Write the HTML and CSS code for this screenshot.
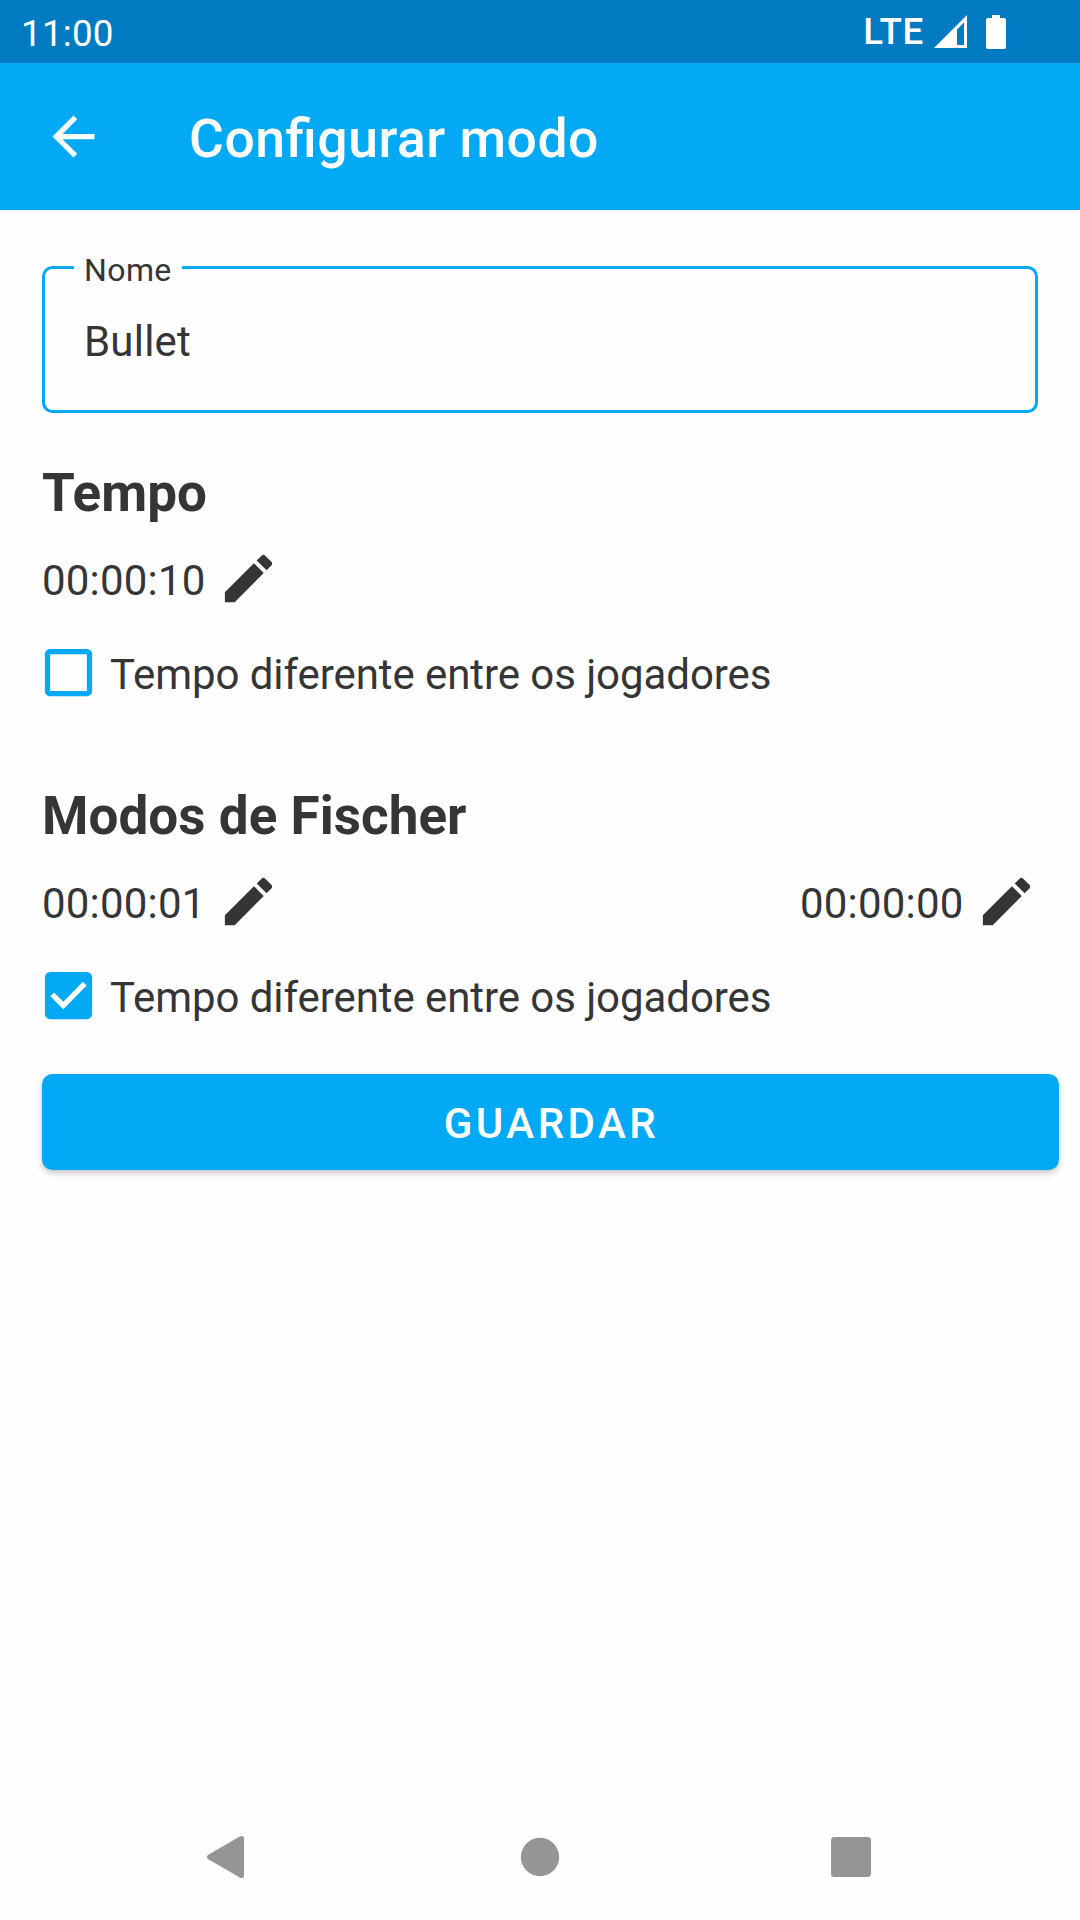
FILE: index.html
```html
<!DOCTYPE html>
<html lang="pt">
<head>
  <meta charset="UTF-8"/>
  <meta name="viewport" content="width=device-width, initial-scale=1.0"/>
  <title>Configurar modo</title>
  <link rel="stylesheet" href="styles.css">
</head>
<body>
  <div class="status-bar">
    <span class="clock">11:00</span>
    <span class="network">LTE</span>
    <svg class="signal" viewBox="0 0 33 33"><path fill-rule="evenodd" d="M33 0V33H0ZM30 7.5L23 14.5V30H30Z"/></svg>
    <svg class="battery" viewBox="0 0 20 34"><path d="M6 0h8v3h4.200a1.800 1.800 0 0 1 1.800 1.800v27.400a1.800 1.800 0 0 1-1.800 1.800H1.800a1.800 1.800 0 0 1-1.800-1.800V4.800A1.800 1.800 0 0 1 1.800 3H6z"/></svg>
  </div>
  <header class="app-bar">
    <svg class="icon" viewBox="0 0 24 24"><path d="M20 11H7.830l5.590-5.590L12 4l-8 8 8 8 1.410-1.410L7.830 13H20v-2z"/></svg>
    <h1>Configurar modo</h1>
  </header>
  <main>
    <div class="field">
      <label for="nome">Nome</label>
      <input type="text" id="nome" value="Bullet" autocomplete="off" spellcheck="false"/>
    </div>

    <section>
      <h2>Tempo</h2>
      <div class="times">
        <div class="time">
          <span>00:00:10</span>
          <svg class="icon" viewBox="0 0 24 24"><path d="M3 17.250V21h3.750L17.810 9.940l-3.750-3.750L3 17.250zM20.710 7.040c.390-.390.390-1.020 0-1.410l-2.340-2.340c-.390-.390-1.020-.390-1.410 0l-1.830 1.830 3.750 3.750 1.830-1.830z"/></svg>
        </div>
      </div>
      <div class="check">
        <svg class="icon" viewBox="0 0 24 24"><path d="M19 5v14H5V5h14m0-2H5c-1.100 0-2 .9-2 2v14c0 1.100.9 2 2 2h14c1.100 0 2-.9 2-2V5c0-1.100-.9-2-2-2z"/></svg>
        <span>Tempo diferente entre os jogadores</span>
      </div>
    </section>

    <section>
      <h2>Modos de Fischer</h2>
      <div class="times">
        <div class="time">
          <span>00:00:01</span>
          <svg class="icon" viewBox="0 0 24 24"><path d="M3 17.250V21h3.750L17.810 9.940l-3.750-3.750L3 17.250zM20.710 7.040c.390-.390.390-1.020 0-1.410l-2.340-2.340c-.390-.390-1.020-.390-1.410 0l-1.830 1.830 3.750 3.750 1.830-1.830z"/></svg>
        </div>
        <div class="time">
          <span>00:00:00</span>
          <svg class="icon" viewBox="0 0 24 24"><path d="M3 17.250V21h3.750L17.810 9.940l-3.750-3.750L3 17.250zM20.710 7.040c.390-.390.390-1.020 0-1.410l-2.340-2.340c-.390-.390-1.020-.390-1.410 0l-1.830 1.830 3.750 3.750 1.830-1.830z"/></svg>
        </div>
      </div>
      <div class="check">
        <svg class="icon" viewBox="0 0 24 24"><rect x="3" y="3" width="18" height="18" rx="2"/><path class="tick" d="M5.800 11.600L10 15.800 18.200 7.500"/></svg>
        <span>Tempo diferente entre os jogadores</span>
      </div>
    </section>

    <button type="button" class="save-btn">GUARDAR</button>
  </main>
  <nav class="nav-bar">
    <svg viewBox="0 0 44 44"><path d="M34.500 3.500V40.500L2.500 22Z" stroke-width="5" stroke-linejoin="round"/></svg>
    <svg viewBox="0 0 44 44"><circle cx="22" cy="22" r="19.200"/></svg>
    <svg viewBox="0 0 44 44"><rect x="2" y="2" width="40" height="40" rx="3.500"/></svg>
  </nav>
</body>
</html>
```
FILE: styles.css
```css
* { box-sizing:border-box; }
body {
  margin:0;
  min-height:100vh;
  display:flex;
  flex-direction:column;
  background:#fefefe;
  color:#353535;
  font-family:Roboto,sans-serif;
  font-size:42px;
}
svg { display:block; flex:none; }
.icon { width:63px; height:63px; fill:currentColor; }
.status-bar {
  height:63px;
  background:#007ac1;
  color:#fff;
  fill:#fff;
  display:flex;
  align-items:center;
  padding:0 74px 0 21px;
  font-size:36.75px;
}
.clock { padding-top:4px; margin-right:auto; letter-spacing:0.25px; }
.network { margin-right:10px; font-weight:500; letter-spacing:0.7px; }
.signal { width:33px; height:33px; margin-right:19px; }
.battery { width:20px; height:34px; }
.app-bar {
  height:147px;
  background:#03a9f4;
  color:#fff;
  display:flex;
  align-items:center;
  gap:84px;
  padding:0 42px;
}
h1 {
  margin:0;
  padding-top:4px;
  font-size:53.5px;
  font-weight:500;
  letter-spacing:0.5px;
  font-feature-settings:"liga" 1;
}
main {
  flex:1;
  padding:56px 42px 0;
}
.field {
  position:relative;
  height:147px;
  border:3px solid #03a9f4;
  border-radius:10.5px;
  margin-bottom:49px;
}
/* sits on top of the outline */
.field label {
  position:absolute;
  left:29px;
  top:-19px;
  width:108px;
  padding-left:10px;
  background:#fefefe;
  font-size:32px;
  line-height:40px;
  letter-spacing:0.4px;
}
.field input {
  width:100%;
  height:100%;
  padding:4px 39px 0;
  border:none;
  outline:none;
  background:none;
  color:inherit;
  font:inherit;
  letter-spacing:0.2px;
}
section { margin-bottom:81px; }
section:last-of-type { margin-bottom:47px; }
h2 {
  margin:0 0 22px;
  font-size:53px;
  line-height:63px;
  font-weight:700;
  letter-spacing:0.05px;
}
.times {
  display:flex;
  justify-content:space-between;
  margin-bottom:31px;
}
.time {
  display:flex;
  align-items:center;
}
.time span {
  width:175px;
  padding-top:4px;
  letter-spacing:0.2px;
}
.check {
  display:flex;
  align-items:center;
  gap:10px;
  margin-left:-5px;
}
.check .icon { color:#03a9f4; }
.check span { padding-top:4px; letter-spacing:-0.07px; }
.tick {
  fill:none;
  stroke:#fff;
  stroke-width:2;
}
.save-btn {
  display:block;
  width:1017px;
  height:96px;
  padding:2px 0 0 2px;
  border:none;
  border-radius:10.5px;
  background:#03a9f4;
  box-shadow:0 3px 6px rgba(0,0,0,0.22);
  color:#fff;
  font-family:inherit;
  font-size:42px;
  font-weight:500;
  letter-spacing:3.45px;
}
.nav-bar {
  height:126px;
  display:flex;
  justify-content:space-between;
  align-items:center;
  padding:0 207px;
  fill:#959595;
  stroke:none;
}
.nav-bar svg { width:44px; height:44px; }
.nav-bar path { stroke:#959595; }
```
